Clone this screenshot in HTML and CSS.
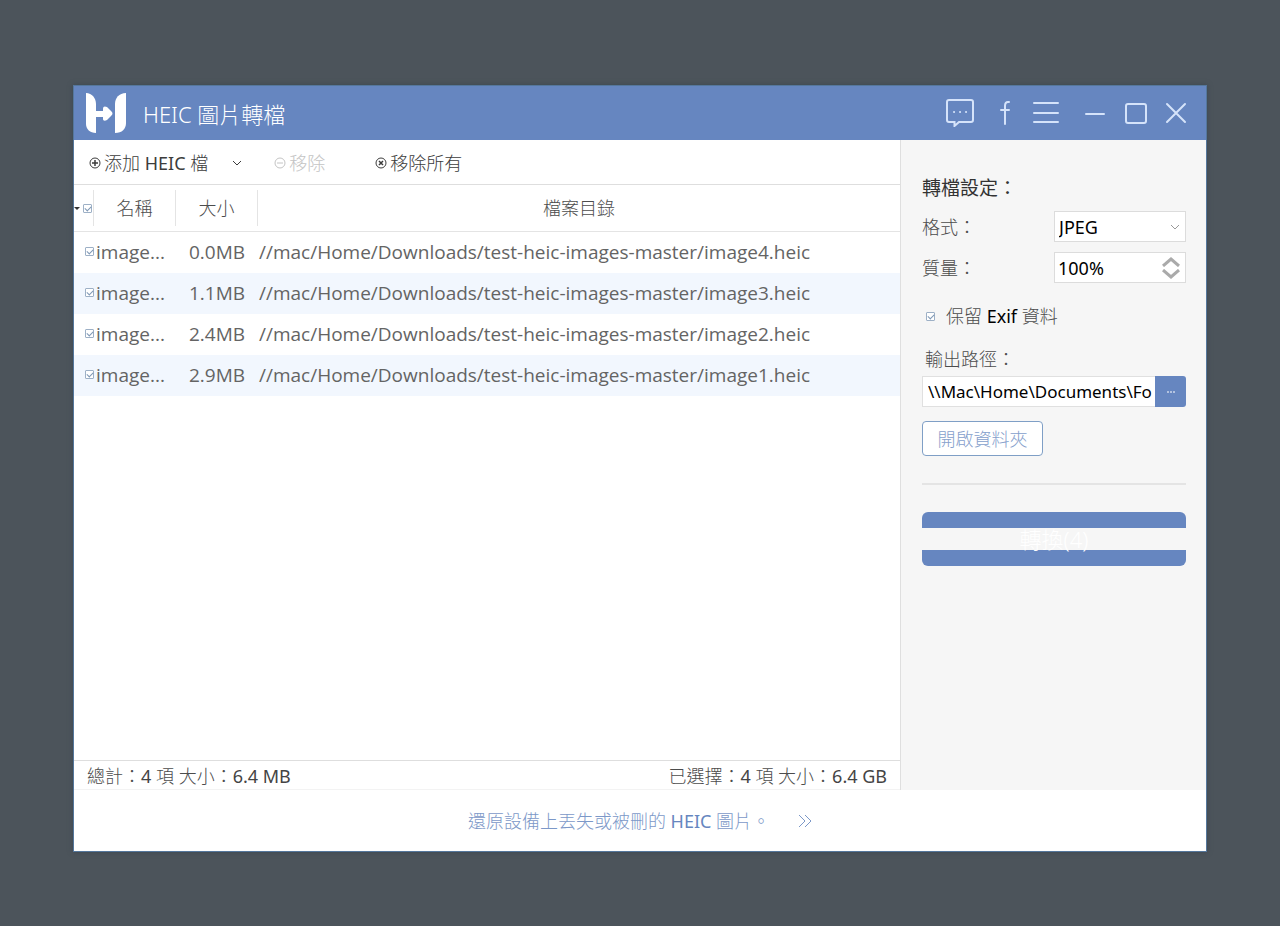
FILE: index.html
```html
<!DOCTYPE html>
<html lang="zh-Hant">
<head>
<meta charset="utf-8">
<title>HEIC 圖片轉檔</title>
<link rel="stylesheet" href="styles.css">
</head>
<body>
<div class="window">
  <header class="titlebar">
    <svg class="logo" width="42" height="42" viewBox="0 0 42 42" aria-hidden="true">
      <path d="M1 1C7 1 11 6 11 12V19H18V17C18 14 20 14 22 15L26 19Q29 21.500 26 24L22 28C20 29 18 29 18 27V25H11V41C5 41 1 37 1 32Z"/>
      <path d="M41 1C34 1 30 6 30 12V41C37 41 41 37 41 31Z"/>
    </svg>
    <h1 class="title">HEIC 圖片轉檔</h1>
    <div class="title-actions">
      <button class="icon-btn" aria-label="意見"><svg width="28" height="28" viewBox="0 0 28 28"><path d="M3 1H25Q27 1 27 3V21Q27 23 25 23H13L8.500 27V23H3Q1 23 1 21V3Q1 1 3 1Z"/><path d="M8 13H8.100M14 13H14.100M20 13H20.100"/></svg></button>
      <button class="icon-btn icon-fb" aria-label="Facebook"><svg width="12" height="26" viewBox="0 0 12 26"><path d="M10 2H9Q6 2 6 6V24M2 10H10"/></svg></button>
      <button class="icon-btn icon-menu" aria-label="選單"><svg width="26" height="24" viewBox="0 0 26 24"><path d="M1 2H25M1 12H25M1 21H25"/></svg></button>
      <button class="icon-btn icon-min" aria-label="最小化"><svg width="20" height="24" viewBox="0 0 20 24"><path d="M1 13H19"/></svg></button>
      <button class="icon-btn icon-max" aria-label="最大化"><svg width="22" height="22" viewBox="0 0 22 22"><rect x="1" y="2" width="20" height="19" rx="2"/></svg></button>
      <button class="icon-btn icon-close" aria-label="關閉"><svg width="22" height="22" viewBox="0 0 22 22"><path d="M2 2L20 20M20 2L2 20"/></svg></button>
    </div>
  </header>

  <div class="content">
    <main class="files">
      <div class="toolbar">
        <button class="tool"><svg width="12" height="12" viewBox="0 0 12 12"><circle cx="6" cy="6" r="5"/><path class="mark" d="M6 3V9M3 6H9"/></svg><span>添加 <b>HEIC</b> 檔</span></button>
        <button class="tool tool-more" aria-label="更多"><svg width="10" height="6" viewBox="0 0 10 6"><path d="M1 1L5 5L9 1"/></svg></button>
        <button class="tool tool-remove" disabled><svg width="12" height="12" viewBox="0 0 12 12"><circle cx="6" cy="6" r="5"/><path d="M3 6H9"/></svg>移除</button>
        <button class="tool tool-clear"><svg width="12" height="12" viewBox="0 0 12 12"><circle cx="6" cy="6" r="5"/><path class="mark" d="M4 4L8 8M8 4L4 8"/></svg>移除所有</button>
      </div>
      <table class="table">
        <colgroup><col class="col-check"><col class="col-name"><col class="col-size"><col></colgroup>
        <thead>
          <tr>
            <th><div class="head head-check"><i class="sort"></i><input class="check" type="checkbox" checked aria-label="全選"></div></th>
            <th><div class="head">名稱</div></th>
            <th><div class="head">大小</div></th>
            <th><div class="head head-last">檔案目錄</div></th>
          </tr>
        </thead>
        <tbody>
          <tr><td class="cell-check"><input class="check" type="checkbox" checked aria-label="image4"></td><td class="cell-name">image...</td><td class="cell-size">0.0MB</td><td class="cell-path">//mac/Home/Downloads/test-heic-images-master/image4.heic</td></tr>
          <tr><td class="cell-check"><input class="check" type="checkbox" checked aria-label="image3"></td><td class="cell-name">image...</td><td class="cell-size">1.1MB</td><td class="cell-path">//mac/Home/Downloads/test-heic-images-master/image3.heic</td></tr>
          <tr><td class="cell-check"><input class="check" type="checkbox" checked aria-label="image2"></td><td class="cell-name">image...</td><td class="cell-size">2.4MB</td><td class="cell-path">//mac/Home/Downloads/test-heic-images-master/image2.heic</td></tr>
          <tr><td class="cell-check"><input class="check" type="checkbox" checked aria-label="image1"></td><td class="cell-name">image...</td><td class="cell-size">2.9MB</td><td class="cell-path">//mac/Home/Downloads/test-heic-images-master/image1.heic</td></tr>
        </tbody>
      </table>
      <div class="status"><span>總計：<b>4</b> 項 大小：<b>6.4 MB</b></span><span>已選擇：<b>4</b> 項 大小：<b>6.4 GB</b></span></div>
    </main>

    <aside class="settings">
      <h2 class="settings-title">轉檔設定：</h2>
      <div class="field">
        <label for="format">格式：</label>
        <div class="control">
          <select id="format"><option>JPEG</option></select>
          <svg class="chevron" width="10" height="6" viewBox="0 0 10 6"><path d="M1 1L5 5L9 1"/></svg>
        </div>
      </div>
      <div class="field">
        <label for="quality">質量：</label>
        <div class="control">
          <input id="quality" type="text" value="100%">
          <div class="spinner">
            <button aria-label="增加"><svg width="18" height="10" viewBox="0 0 18 10"><path d="M1 9L9 2L17 9"/></svg></button>
            <button aria-label="減少"><svg width="18" height="10" viewBox="0 0 18 10"><path d="M1 1L9 8L17 1"/></svg></button>
          </div>
        </div>
      </div>
      <label class="exif"><input class="check" type="checkbox" checked><span>保留 <b>Exif</b> 資料</span></label>
      <label class="path-label" for="output">輸出路徑：</label>
      <div class="path-row">
        <input id="output" type="text" value="\\Mac\Home\Documents\Fo">
        <button class="browse" aria-label="瀏覽"><svg width="8" height="2" viewBox="0 0 8 2"><path d="M0 1H2M3 1H5M6 1H8"/></svg></button>
      </div>
      <button class="open-folder">開啟資料夾</button>
      <hr class="divider">
      <button class="convert">轉換(4)</button>
    </aside>
  </div>

  <footer class="promo">
    <a href="#">還原設備上丟失或被刪的 <b>HEIC</b> 圖片。<svg width="14" height="14" viewBox="0 0 14 14"><path d="M1 1L7 7L1 13M7 1L13 7L7 13"/></svg></a>
  </footer>
</div>
</body>
</html>
```

FILE: styles.css
```css
* {
  box-sizing: border-box;
}

body {
  margin: 0;
  min-height: 100vh;
  padding: 85px 73px 74px;
  display: flex;
  background: #4c545b;
  color: #4c4c4c;
  font: 300 18px/24px "Noto Sans", "Noto Sans CJK TC", sans-serif;
}

button,
input,
select {
  margin: 0;
  padding: 0;
  border: 0;
  background: none;
  color: inherit;
  font: inherit;
}

svg {
  display: block;
  flex: none;
  fill: none;
  stroke: currentColor;
}

b {
  font-weight: 400;
}

.window {
  flex: 1;
  min-width: 0;
  display: flex;
  flex-direction: column;
  border: 1px solid #55779c;
  background: #fff;
  box-shadow: 0 0 5px #3c4650;
}

.titlebar {
  display: flex;
  align-items: center;
  height: 54px;
  padding: 0 19px 0 11px;
  background: #6686c0;
  color: #fff;
}

.logo {
  fill: #fff;
  stroke: none;
}

.title {
  flex: 1;
  margin: 0 0 0 16px;
  padding-top: 2px;
  font-size: 22px;
  font-weight: 300;
}

.title-actions {
  display: flex;
  align-items: center;
  color: #d5e3fa;
}

.icon-btn svg {
  stroke-width: 2;
  stroke-linecap: round;
}

.icon-fb {
  margin-left: 25px;
}

.icon-menu {
  margin-left: 22px;
}

.icon-min {
  margin-left: 26px;
}

.icon-max {
  margin-left: 20px;
}

.icon-close {
  margin-left: 18px;
}

.content {
  flex: 1;
  display: flex;
}

.files {
  flex: 1;
  min-width: 0;
  display: flex;
  flex-direction: column;
  border-right: 1px solid #dfdfdf;
}

.toolbar {
  display: flex;
  align-items: center;
  height: 45px;
  padding: 1px 0 0 15px;
  border-bottom: 1px solid #dedede;
  color: #3c3c3c;
}

.tool {
  display: flex;
  align-items: center;
  gap: 3px;
}

.mark {
  stroke-width: 1.5;
}

.tool-more {
  margin-left: 24px;
}

.tool-remove {
  margin-left: 32px;
  color: #c4c4c4;
}

.tool-clear {
  margin-left: 50px;
}

.table {
  width: 100%;
  table-layout: fixed;
  border-spacing: 0;
}

.col-check {
  width: 20px;
}

.col-name,
.col-size {
  width: 82px;
}

th {
  height: 47px;
  padding: 0;
  border-bottom: 1px solid #e4e4e4;
  font-weight: 300;
}

.head {
  display: flex;
  align-items: center;
  justify-content: center;
  height: 36px;
  border-right: 1px solid #e4e4e4;
}

.head-last {
  border-right: 0;
}

.head-check {
  justify-content: flex-start;
  gap: 3px;
}

.sort {
  border: 3px solid transparent;
  border-top-color: #333;
  border-bottom: 0;
}

td {
  height: 41px;
  padding: 0 0 2px;
  overflow: hidden;
  white-space: nowrap;
  font-family: "Open Sans", sans-serif;
  font-size: 19px;
  font-weight: 400;
  color: #646464;
}

tbody tr:nth-child(even) {
  background: #f2f7fe;
}

.cell-check .check {
  margin-left: 11px;
}

.cell-name {
  padding-left: 2px;
}

.cell-size {
  padding-left: 13px;
}

.cell-path {
  padding-left: 1px;
}

.check {
  appearance: none;
  display: block;
  position: relative;
  flex: none;
  width: 9px;
  height: 9px;
  border: 1px solid #9db0c6;
  border-radius: 1px;
  background: #fff;
}

.check:checked::after {
  content: "";
  position: absolute;
  left: 1px;
  top: 1px;
  width: 5px;
  height: 3px;
  border: solid #7f98b5;
  border-width: 0 0 1px 1px;
  transform: rotate(-45deg);
}

.status {
  display: flex;
  align-items: center;
  justify-content: space-between;
  height: 30px;
  margin-top: auto;
  padding: 2px 13px 0;
  border-top: 1px solid #dedede;
  border-bottom: 1px solid #f3f3f3;
}

.status b {
  color: #444;
}

.settings {
  flex: none;
  width: 305px;
  padding: 36px 20px 0 21px;
  background: #f6f6f6;
}

.settings-title {
  margin: 0 0 11px;
  font-size: 19px;
  font-weight: 400;
  color: #333;
}

.field {
  display: flex;
  align-items: center;
  justify-content: space-between;
  margin-bottom: 10px;
}

.control {
  display: flex;
  align-items: center;
  position: relative;
  width: 132px;
  height: 31px;
  border: 1px solid #dcdcdc;
  background: #fff;
  color: #000;
  font-weight: 400;
}

.control select {
  appearance: none;
  width: 100%;
  padding-left: 4px;
}

.control input {
  flex: 1;
  min-width: 0;
  padding-left: 3px;
}

.chevron {
  position: absolute;
  right: 5px;
  color: #999;
  pointer-events: none;
}

.spinner {
  display: grid;
  gap: 2px;
  padding-right: 5px;
  color: #aaa;
}

.spinner svg {
  stroke-width: 3;
}

.exif {
  display: flex;
  align-items: center;
  gap: 11px;
  margin: 21px 0 19px 4px;
}

.exif b {
  color: #000;
}

.path-label {
  display: block;
  margin: 0 0 5px 3px;
}

.path-row {
  display: flex;
  height: 31px;
}

.path-row input {
  flex: 1;
  min-width: 0;
  padding-left: 5px;
  border: 1px solid #e0e0e0;
  border-right: 0;
  background: #fff;
  color: #000;
  font-size: 17px;
  font-weight: 400;
}

.browse {
  display: grid;
  place-items: center;
  width: 31px;
  border-radius: 0 3px 3px 0;
  background: #6686c0;
  color: #fff;
}

.open-folder {
  display: block;
  width: 121px;
  height: 35px;
  margin-top: 14px;
  border: 1px solid #7f9fc6;
  border-radius: 4px;
  background: #fff;
  color: #86a0cc;
}

.divider {
  height: 2px;
  margin: 27px 0;
  border: 0;
  background: #e4e4e4;
}

.convert {
  display: block;
  width: 100%;
  height: 54px;
  border-radius: 6px;
  background: linear-gradient(#6686c0 16px, #f6f6f6 16px 38px, #6686c0 38px);
  color: #fff;
  font-size: 22px;
}

.promo {
  display: flex;
  align-items: center;
  justify-content: center;
  height: 61px;
}

.promo a {
  display: flex;
  align-items: center;
  color: #7c98c8;
  text-decoration: none;
  white-space: pre;
}

.promo b {
  color: #6686c0;
}

.promo svg {
  margin-left: 28px;
}
```
